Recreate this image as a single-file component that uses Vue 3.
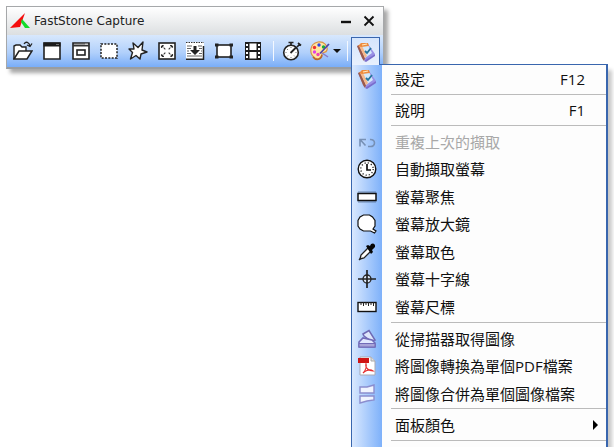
<script setup>
const checkBook = `
<path d="M1 4 L12 2 L19 12 L10 19 L7 18 Z" fill="#9a90e6"/>
<path d="M8 19 L19 12 V14 L10 20 Z" fill="#7a6ccc"/>
<path d="M1 4 L3 3 L9 16 L8 19 L6 16 Z" fill="#9c5b4a"/>
<path d="M4 4 L12 3 L16 11 L9 16 Z" fill="#d3e9fb"/>
<path d="M3 4 L6 4 L11 14 L9 16 Z" fill="#f7b98a"/>
<path d="M2 4 L5 1 L12 1 L13 4 L5 5 Z" fill="#ee8a3c"/>
<path d="M6 3 L11 2" stroke="#ffe9bd" stroke-width="1.2"/>
<path d="M9 9 L11 11 L15 6" fill="none" stroke="#23749c" stroke-width="1.800"/>`

const captureTools = [
  { label: 'Open file', art: `<path d="M1 18 V5 L3 4 H7 L9 6 H13 V10" fill="#fff" stroke="#222" stroke-width="1.4"/><path d="M1 18 L6 10 H19 L14 18 Z" fill="#fff" stroke="#222" stroke-width="1.5"/><path d="M11 3 C13 0 16 1 17 5 M14 4 L17 5.500 L19 2.500" fill="none" stroke="#222" stroke-width="1.3"/>` },
  { label: 'Capture active window', art: `<path d="M2 2 H18 V18 H2 Z" fill="#fff" stroke="#222" stroke-width="1.6"/><path d="M1.500 1.500 H18.500 V5.500 H1.500 Z" fill="#1b1b1b"/><path d="M14 3.500 H17" stroke="#888" stroke-width=".8"/>` },
  { label: 'Capture window or object', art: `<path d="M2 2 H18 V18 H2 Z" fill="#fff" stroke="#222" stroke-width="1.6"/><path d="M2 4.500 H18" stroke="#333" stroke-width="2"/><path d="M14 3.200 H17" stroke="#ddd"/><rect x="6" y="9" width="8" height="5" fill="#fff" stroke="#222" stroke-width="1.6"/>` },
  { label: 'Capture rectangular region', art: `<rect x="2" y="3" width="16" height="14" fill="#fff" stroke="#222" stroke-width="1.5" stroke-dasharray="2 1.333"/>` },
  { label: 'Capture freehand region', art: `<path d="M5 2 L10 6.500 L15 1 L14 9 L19 11 L13 13 L12 18 L8 14.500 L2.500 18 L4.500 11.500 L1 8 H6 Z" fill="#fff" stroke="#222" stroke-width="1.4" stroke-linejoin="round"/>` },
  { label: 'Capture full screen', art: `<rect x="2" y="2" width="16" height="16" fill="#fff" stroke="#222" stroke-width="1.6"/><path d="M4.500 7 V4.500 H7 M13 4.500 H15.500 V7 M15.500 13 V15.500 H13 M7 15.500 H4.500 V13 M5 5 L8.500 8.500 M15 5 L11.500 8.500 M15 15 L11.500 11.500 M5 15 L8.500 11.500" fill="none" stroke="#333" stroke-width="1.1" stroke-dasharray="2 .7"/>` },
  { label: 'Capture scrolling window', art: `<rect x="1" y="1" width="18" height="18" fill="#fff"/><path d="M1 1.500 H19" stroke="#333" stroke-dasharray="1.500 1"/><path d="M1 18.200 H19 M18.500 5 V19" stroke="#222" stroke-width="1.5"/><path d="M2 5 H7 M13 5 H17 M2 7.500 H6 M14 7.500 H17 M2 10 H4 M16 10 H17 M2 12.500 H6 M14 12.500 H17 M2 15 H17" stroke="#666"/><path d="M8.500 5 H11.500 V9 H15 L10 14 L5 9 H8.500Z" fill="#222"/>` },
  { label: 'Capture fixed-size region', art: `<rect x="3" y="4" width="14" height="12" fill="#fff" stroke="#222" stroke-width="1.6"/><path d="M1 2.500 h3.500 v3 h-3.500z M15.500 2.500 h3.500 v3 h-3.500z M1 14.500 h3.500 v3 h-3.500z M15.500 14.500 h3.500 v3 h-3.500z" fill="#222"/>` },
  { label: 'Screen recorder', art: `<rect x="2" y="1" width="16" height="18" fill="#1d1d1d"/><path d="M6.500 2.500 h7 v6.500 h-7z M6.500 11 h7 v6.500 h-7z M3 3 h2v2h-2z M3 7 h2v2h-2z M3 11 h2v2h-2z M3 15 h2v2h-2z M15 3 h2v2h-2z M15 7 h2v2h-2z M15 11 h2v2h-2z M15 15 h2v2h-2z" fill="#fff"/>` },
]

const art = {
  timer: `<circle cx="9" cy="11.500" r="7.300" fill="#fff" stroke="#222" stroke-width="1.6"/><path d="M6.500 1.500 H11.500 M9 2 V4 M16 2 L19 4.500 M17.500 3.500 L15 6" stroke="#222" stroke-width="1.7"/><path d="M8.500 12 L14 6.500" stroke="#222" stroke-width="1.800"/><path d="M9 6 v1 M3.500 11.500 h1 M13.500 11.500 h1 M9 17 v-1 M5 8 l1 1 M5 15.500 l1 -1 M13 15.500 l-1 -1" stroke="#777"/>`,
  palette: `<path d="M8 1 C14 0 18 5 17 9 C16 13 13 10 12 13 C12 17 9 19 5 17 C-1 13 -1 3 8 1Z" fill="#ffe6a0" stroke="#d99347" stroke-width="1.2"/><path d="M3 16 C6 20 11 19 12 14" fill="none" stroke="#b8652a" stroke-width="1.500"/><circle cx="9" cy="4" r="1.700" fill="#3045e8"/><circle cx="4.500" cy="6.500" r="1.700" fill="#ef3030"/><circle cx="13.500" cy="6" r="1.700" fill="#18ac3a"/><circle cx="4.500" cy="11" r="1.700" fill="#e23ee8"/><circle cx="8" cy="13.500" r="1.700" fill="#ef42b2"/><path d="M10 12.500 L19 3" stroke="#4d45a8" stroke-width="1.800"/><path d="M12 12 L18 16" stroke="#8a79c4" stroke-width="1.5"/>`,
  book: checkBook,
}

const groups = [
  [{ text: '設定', key: 'F12', art: checkBook }],
  [{ text: '說明', key: 'F1' }],
  [
    { text: '重複上次的擷取', disabled: true, art: `<path d="M3 14.500 V7.500 H9 M3.500 8 L8.500 13.500 M13 7.500 C19 7 19 15 13 14.500 H11" fill="none" stroke="#7790b5" stroke-width="1.600"/>` },
    { text: '自動擷取螢幕', art: `<circle cx="10" cy="10" r="8.800" fill="#fff" stroke="#111" stroke-width="1.4"/><circle cx="10" cy="10" r="6.200" fill="none" stroke="#222" stroke-width="1.300" stroke-dasharray="1.200 2.046"/><path d="M10 5 V11 H14" fill="none" stroke="#111" stroke-width="1.700"/>` },
    { text: '螢幕聚焦', art: `<path d="M1 4 H19 V16 H1Z" fill="#57749c" opacity=".4"/><rect x="1" y="6.500" width="18" height="7" fill="#fff" stroke="#111" stroke-width="1.500"/>` },
    { text: '螢幕放大鏡', art: `<path d="M6.500 1 H12.500 L15.500 3 L18 6.500 V12 L16 15 L19 17 L17.500 19 L13.500 17 H6.500 L3 15 L1 12 V6.500 L3 3Z" fill="#fff" stroke="#111" stroke-width="1.200"/>` },
    { text: '螢幕取色', art: `<path d="M3 17 L4 13 L11 6 L14 9 L7 16Z" fill="#fff" stroke="#222" stroke-width="1.300"/><path d="M2 18 L4 16" stroke="#222" stroke-width="1.500"/><path d="M9 4 L11 3 L13 4 C14 0 19 1 18 5 L15 8 L16 10 L14 12Z" fill="#050505"/>` },
    { text: '螢幕十字線', art: `<circle cx="10" cy="10" r="4" fill="#dce8f8" stroke="#222" stroke-width="1.300"/><path d="M10 1 V19 M1 10 H19" stroke="#222" stroke-width="1.700"/>` },
    { text: '螢幕尺標', art: `<rect x="1" y="5.500" width="18" height="9" fill="#fff" stroke="#111" stroke-width="1.400"/><path d="M4 5 v3 M6.500 5 v4 M9 5 v3 M11.500 5 v4 M14 5 v3 M16.500 5 v4" stroke="#222"/>` },
  ],
  [
    { text: '從掃描器取得圖像', art: `<path d="M6 5 L12 1.500 L18 11 L14 12 L7 7Z" fill="#dfe6fb" stroke="#6f69b4" stroke-width="1.500"/><path d="M2 13 L6 9 L15 11 L18 14 V18 H2Z" fill="#e2e9ff" stroke="#716bb8" stroke-width="1.600"/><path d="M2 14.500 H18 V18 H2Z" fill="#a9a4d8" stroke="#716bb8"/>` },
    { text: '將圖像轉換為單個PDF檔案', art: `<path d="M3 1 H14 L18 5 V19 H3Z" fill="#fff" stroke="#a9a9b2"/><path d="M14 1 V5 H18" fill="#ddd" stroke="#aaa"/><path d="M1 2 H12 V7 H1Z" fill="#cf1515"/><path d="M6 17 C8 15 10 11 9 8 C8 12 12 15 16 15 C12 12 7 16 6 17" fill="none" stroke="#e42c2c" stroke-width="1.200"/>` },
    { text: '將圖像合併為單個圖像檔案', art: `<path d="M3 3 L10 3 L17 1 V9 H3Z M3 12 H17 V16 L10 17 L3 19Z" fill="#f0f4ff" stroke="#8b8dce" stroke-width="1.400"/>` },
  ],
  [{ text: '面板顏色', submenu: true }],
]
</script>

<template>
  <main class="desktop">
    <section class="capture-window" aria-label="FastStone Capture">
      <header class="titlebar">
        <svg class="logo" viewBox="0 0 20 16" aria-hidden="true">
          <path d="M0 15 L15 0 L10 14 Z" fill="#f50d0d" />
          <path d="M12 6 L20 15 H15 L11 9 Z" fill="#12dc2b" />
        </svg>
        <h1>FastStone Capture</h1>
        <button class="window-button" aria-label="Minimize">
          <svg viewBox="0 0 12 12"><path d="M1 7 H11" stroke="#111" stroke-width="2.400" /></svg>
        </button>
        <button class="window-button" aria-label="Close">
          <svg viewBox="0 0 12 12"><path d="M1.500 1.500 L10.500 10.500 M10.500 1.500 L1.500 10.500" stroke="#111" stroke-width="1.800" /></svg>
        </button>
      </header>
      <div class="toolbar">
        <div class="tools">
          <button v-for="tool in captureTools" :key="tool.label" :aria-label="tool.label">
            <svg class="icon" viewBox="0 0 20 20" v-html="tool.art" />
          </button>
        </div>
        <span class="divider" />
        <button class="timer" aria-label="Delay"><svg class="icon" viewBox="0 0 20 20" v-html="art.timer" /></button>
        <button class="output" aria-label="Output">
          <svg class="icon" viewBox="0 0 20 20" v-html="art.palette" />
          <svg class="caret" viewBox="0 0 8 4"><path d="M0 0 H8 L4 4Z" fill="#111" /></svg>
        </button>
        <span class="divider" />
        <div class="settings">
          <button class="settings-button" aria-label="Settings" aria-haspopup="menu" aria-expanded="true">
            <svg class="icon" viewBox="0 0 20 20" v-html="art.book" />
          </button>
          <div class="menu" role="menu">
            <div v-for="(group, index) in groups" :key="index" class="group" :style="{ flexGrow: group.length }">
              <button v-for="item in group" :key="item.text" class="item" role="menuitem" :disabled="item.disabled">
                <span class="item-icon"><svg v-if="item.art" class="icon" viewBox="0 0 20 20" v-html="item.art" /></span>
                <span class="item-text">{{ item.text }}</span>
                <span v-if="item.key" class="shortcut">{{ item.key }}</span>
                <svg v-if="item.submenu" class="submenu" viewBox="0 0 5 10"><path d="M0 0 L5 5 L0 10Z" fill="#000" /></svg>
              </button>
              <div class="rule" role="separator" />
            </div>
          </div>
        </div>
      </div>
    </section>
  </main>
</template>

<style>
body {
  margin: 0;
  background: #fff;
}
</style>

<style scoped>
* {
  box-sizing: border-box;
}

.desktop {
  min-height: 100vh;
  padding: 6px;
  overflow: hidden;
  font-family: "Open Sans", "Noto Sans CJK TC", sans-serif;
}

button {
  display: flex;
  align-items: center;
  justify-content: center;
  margin: 0;
  padding: 0;
  border: 0;
  background: none;
  color: inherit;
  font: inherit;
}

svg {
  display: block;
  flex: none;
}

.icon {
  width: 20px;
  height: 20px;
}

.capture-window {
  width: 378px;
  border: 1px solid #a6a8aa;
  border-bottom: 2px solid #9a9da0;
  box-shadow: 4px 4px 4px rgba(0, 0, 0, 0.35);
}

.titlebar {
  display: flex;
  align-items: center;
  height: 28px;
  padding: 0 3px 0 3px;
  background: linear-gradient(#ffffff, #dcdfe1);
}

.logo {
  width: 20px;
  height: 16px;
}

h1 {
  flex: 1;
  margin: 0 0 0 4px;
  color: #222;
  font: 12px/20px "DejaVu Sans", sans-serif;
}

.window-button {
  width: 23px;
  height: 22px;
}

.window-button svg {
  width: 12px;
  height: 12px;
}

.toolbar {
  display: flex;
  align-items: center;
  height: 32px;
  padding: 0 3px 0 2px;
  background: linear-gradient(#d8e8fd, #b1d0fb 55%, #79adf8);
}

.tools {
  display: flex;
  flex: 1;
  padding-right: 3px;
}

.tools button {
  flex: 1;
}

.divider {
  width: 1px;
  height: 20px;
  margin: 0 3px;
  background: #f4f8ff;
}

.timer {
  width: 29px;
}

.output {
  width: 38px;
  gap: 3px;
}

.caret {
  width: 8px;
  height: 4px;
}

.settings {
  position: relative;
  align-self: stretch;
  padding-top: 2px;
}

.settings-button {
  width: 29px;
  height: 28px;
  border: 1px solid #3966ae;
  border-bottom: 0;
  background: linear-gradient(#d5e5fc, #e8f0fd);
}

.menu {
  position: absolute;
  top: 29px;
  left: 0;
  display: flex;
  flex-direction: column;
  width: 257px;
  height: calc(100vh - 64px);
  padding: 0 0 4px;
  border: 1px solid #3966ae;
  border-right-width: 2px;
  border-bottom: 0;
  background: linear-gradient(90deg, #d9e8fe, #7eb1fa 30px, #fdfdfd 30px);
  box-shadow: 4px 6px 4px rgba(0, 0, 0, 0.22);
}

.settings-button::after {
  position: absolute;
  z-index: 1;
  top: 29px;
  left: 1px;
  width: 27px;
  height: 1px;
  background: #e8f0fd;
  content: "";
}

.group {
  display: flex;
  flex-direction: column;
  flex-basis: 4px;
}

.item {
  flex: 1;
  width: 100%;
  padding-right: 12px;
  justify-content: flex-start;
  color: #111;
  font-size: 15px;
  line-height: 20px;
  text-align: left;
}

.item:disabled {
  color: #a8a8a8;
}

.item-icon {
  display: flex;
  justify-content: center;
  width: 30px;
}

.item-text {
  flex: 1;
  padding-left: 13px;
  white-space: nowrap;
}

.shortcut {
  padding-right: 9px;
}

.submenu {
  width: 5px;
  height: 10px;
  margin-right: -4px;
}

.rule {
  height: 4px;
  margin-left: 39px;
  background: linear-gradient(transparent 1px, #bbbbbb 1px, #bbbbbb 2px, transparent 2px);
}
</style>
